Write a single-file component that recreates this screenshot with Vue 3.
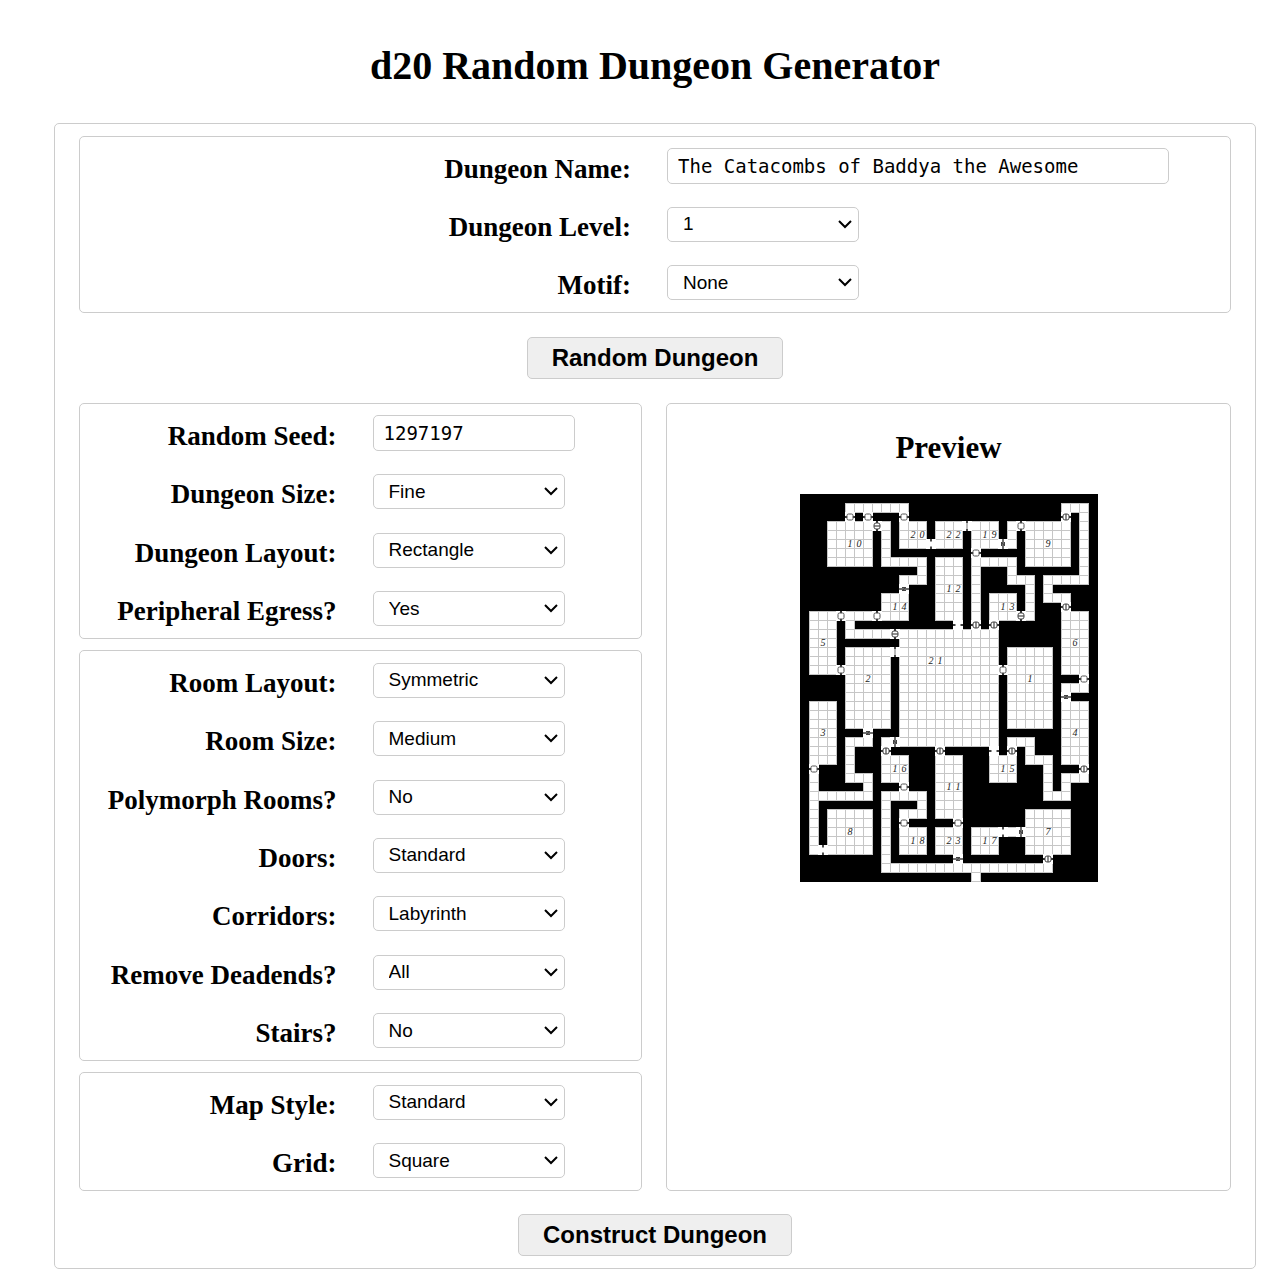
<script setup>
import { ref } from 'vue'

const name = ref('The Catacombs of Baddya the Awesome')
const seed = ref('1297197')

const naming = [
  { id: 'level', label: 'Dungeon Level:', options: ['1', '2', '3', '4', '5'] },
  { id: 'motif', label: 'Motif:', options: ['None'] },
]
const dungeon = [
  { id: 'size', label: 'Dungeon Size:', options: ['Fine'] },
  { id: 'layout', label: 'Dungeon Layout:', options: ['Rectangle'] },
  { id: 'egress', label: 'Peripheral Egress?', options: ['Yes', 'No'] },
]
const rooms = [
  { id: 'room-layout', label: 'Room Layout:', options: ['Symmetric'] },
  { id: 'room-size', label: 'Room Size:', options: ['Medium'] },
  { id: 'polymorph', label: 'Polymorph Rooms?', options: ['No', 'Yes'] },
  { id: 'doors', label: 'Doors:', options: ['Standard'] },
  { id: 'corridors', label: 'Corridors:', options: ['Labyrinth'] },
  { id: 'deadends', label: 'Remove Deadends?', options: ['All'] },
  { id: 'stairs', label: 'Stairs?', options: ['No', 'Yes'] },
]
const mapping = [
  { id: 'map-style', label: 'Map Style:', options: ['Standard'] },
  { id: 'grid', label: 'Grid:', options: ['Square'] },
]

// Open floor as [first column, first row, last column, last row]
const areas = [
  [5, 1, 11, 1], [3, 3, 7, 7], [9, 3, 9, 7], [9, 7, 13, 7], [13, 7, 13, 9], [11, 9, 13, 9],
  [9, 11, 11, 13], [11, 3, 13, 5], [15, 3, 17, 5], [15, 7, 17, 13], [1, 13, 3, 19],
  [5, 13, 7, 13], [5, 14, 5, 14], [5, 15, 9, 15], [11, 15, 21, 27], [5, 17, 9, 25],
  [1, 23, 3, 29], [1, 31, 1, 39], [1, 33, 7, 33], [7, 31, 7, 32], [5, 31, 7, 31],
  [5, 27, 5, 31], [5, 27, 7, 27], [3, 35, 7, 39], [9, 27, 9, 27], [9, 29, 11, 31],
  [9, 33, 13, 33], [9, 33, 9, 41], [13, 33, 13, 35], [11, 35, 13, 35], [11, 37, 13, 39],
  [9, 41, 27, 41], [19, 42, 19, 42], [15, 29, 17, 35], [15, 37, 17, 39], [19, 37, 21, 39],
  [23, 37, 23, 37], [25, 35, 29, 39], [23, 27, 25, 27], [25, 27, 25, 29], [25, 29, 27, 29],
  [27, 29, 27, 33], [27, 33, 29, 33], [29, 31, 29, 33], [29, 31, 31, 31], [29, 23, 31, 29],
  [21, 29, 23, 31], [23, 17, 27, 25], [29, 13, 31, 19], [29, 21, 31, 21], [27, 11, 29, 11],
  [27, 9, 27, 11], [27, 9, 31, 9], [31, 1, 31, 9], [29, 1, 31, 1], [25, 3, 29, 7],
  [23, 3, 23, 5], [19, 3, 21, 5], [19, 7, 23, 7], [19, 7, 19, 13], [23, 7, 23, 9],
  [23, 9, 25, 9], [25, 9, 25, 13], [21, 11, 23, 13],
]
const seen = new Set()
const cells = []
for (const [c1, r1, c2, r2] of areas) {
  for (let c = c1; c <= c2; c++) {
    for (let r = r1; r <= r2; r++) {
      const key = c + ',' + r
      if (!seen.has(key)) {
        seen.add(key)
        cells.push({ key, x: c * 9, y: r * 9 })
      }
    }
  }
}

// [column, row, kind, 1 when the wall runs vertically]
const doors = [
  [5, 2, 'door', 0], [7, 2, 'door', 0], [11, 2, 'door', 0], [8, 3, 'locked', 1],
  [14, 5, 'arch', 1], [11, 10, 'secret', 0], [4, 13, 'door', 1], [8, 13, 'door', 1],
  [10, 15, 'locked', 1], [10, 17, 'open', 1], [4, 19, 'door', 1], [7, 26, 'secret', 0],
  [10, 27, 'secret', 1], [9, 28, 'locked', 0], [15, 28, 'locked', 0], [1, 30, 'door', 0],
  [11, 32, 'door', 0], [11, 36, 'door', 0], [17, 36, 'door', 0], [2, 39, 'arch', 1],
  [17, 40, 'secret', 0], [22, 37, 'arch', 1], [24, 37, 'secret', 1], [27, 40, 'locked', 0],
  [21, 28, 'arch', 0], [23, 28, 'locked', 0], [31, 30, 'locked', 0], [29, 22, 'secret', 0],
  [31, 20, 'door', 0], [22, 19, 'door', 1], [29, 12, 'locked', 0], [29, 2, 'locked', 0],
  [24, 3, 'door', 1], [22, 5, 'secret', 1], [18, 3, 'open', 1], [19, 6, 'door', 0],
  [24, 13, 'locked', 1], [21, 14, 'locked', 0], [19, 14, 'locked', 0], [17, 14, 'arch', 0],
]

// [column, row, room number]; each digit takes one square
const numbers = [
  [5, 5, '10'], [12, 4, '20'], [16, 4, '22'], [20, 4, '19'], [27, 5, '9'], [16, 10, '12'],
  [10, 12, '14'], [22, 12, '13'], [2, 16, '5'], [7, 20, '2'], [14, 18, '21'], [25, 20, '1'],
  [30, 16, '6'], [2, 26, '3'], [30, 26, '4'], [10, 30, '16'], [5, 37, '8'], [12, 38, '18'],
  [16, 32, '11'], [22, 30, '15'], [20, 38, '17'], [16, 38, '23'], [27, 37, '7'],
]
const digits = numbers.flatMap(([c, r, n]) =>
  [...n].map((d, i) => ({ key: c + i + '-' + r, d, x: (c + i) * 9 + 5, y: r * 9 + 8 })),
)
</script>

<template>
  <main class="page">
    <h1>d20 Random Dungeon Generator</h1>
    <form class="card" @submit.prevent>
      <section class="group group-naming">
        <div class="row">
          <label for="name">Dungeon Name:</label>
          <div class="field"><input id="name" v-model="name" class="wide" type="text" spellcheck="false" /></div>
        </div>
        <div v-for="f in naming" :key="f.id" class="row">
          <label :for="f.id">{{ f.label }}</label>
          <div class="field">
            <select :id="f.id"><option v-for="o in f.options" :key="o">{{ o }}</option></select>
          </div>
        </div>
      </section>

      <div class="action"><button type="button">Random Dungeon</button></div>

      <div class="columns">
        <div class="settings">
          <section class="group group-dungeon">
            <div class="row">
              <label for="seed">Random Seed:</label>
              <div class="field"><input id="seed" v-model="seed" type="text" /></div>
            </div>
            <div v-for="f in dungeon" :key="f.id" class="row">
              <label :for="f.id">{{ f.label }}</label>
              <div class="field">
                <select :id="f.id"><option v-for="o in f.options" :key="o">{{ o }}</option></select>
              </div>
            </div>
          </section>
          <section class="group group-rooms">
            <div v-for="f in rooms" :key="f.id" class="row">
              <label :for="f.id">{{ f.label }}</label>
              <div class="field">
                <select :id="f.id"><option v-for="o in f.options" :key="o">{{ o }}</option></select>
              </div>
            </div>
          </section>
          <section class="group group-map">
            <div v-for="f in mapping" :key="f.id" class="row">
              <label :for="f.id">{{ f.label }}</label>
              <div class="field">
                <select :id="f.id"><option v-for="o in f.options" :key="o">{{ o }}</option></select>
              </div>
            </div>
          </section>
        </div>

        <section class="group preview">
          <h2>Preview</h2>
          <svg class="map" width="298" height="388" viewBox="0 0 298 388" role="img" aria-label="Dungeon map">
            <rect width="298" height="388" fill="#000" />
            <g fill="#fff" stroke="#c6c6c6">
              <rect v-for="c in cells" :key="c.key" :x="c.x + 0.5" :y="c.y + 0.5" width="9" height="9" />
            </g>
            <g
              v-for="[c, r, kind, vertical] in doors"
              :key="c + '-' + r"
              :transform="`translate(${c * 9 + 5} ${r * 9 + 5}) rotate(${vertical ? 90 : 0})`"
            >
              <rect x="-5" y="-5" width="10" height="10" fill="#fff" />
              <template v-if="kind === 'door'">
                <path d="M-5.5 0H5.5" stroke="#000" stroke-width="1.6" />
                <rect x="-3" y="-3" width="6" height="6" rx="1.5" fill="#fff" stroke="#555" stroke-width="1" />
              </template>
              <template v-else-if="kind === 'locked'">
                <path d="M-5.5 0H5.5" stroke="#000" stroke-width="1.6" />
                <rect x="-3" y="-3" width="6" height="6" rx="2" fill="#fff" stroke="#444" stroke-width="1" />
                <path d="M0 -3V3" stroke="#444" stroke-width="1.2" />
              </template>
              <template v-else-if="kind === 'secret'">
                <path d="M-5.5 0H5.5" stroke="#111" stroke-width="1.2" />
                <path d="M-2 -1.5H2L-2 1.5H2" fill="none" stroke="#444" stroke-width="1" />
              </template>
              <template v-else-if="kind === 'arch'">
                <path d="M-5.5 0H-2.5M2.5 0H5.5" stroke="#000" stroke-width="1.4" />
              </template>
              <template v-else>
                <path d="M-5.5 0H-3M3 0H5.5" stroke="#000" stroke-width="1.4" />
                <path d="M-3 0H3" stroke="#777" stroke-width="1" />
              </template>
            </g>
            <text v-for="t in digits" :key="t.key" :x="t.x" :y="t.y" class="digit">{{ t.d }}</text>
          </svg>
        </section>
      </div>

      <div class="action"><button type="submit">Construct Dungeon</button></div>
    </form>
  </main>
</template>

<style>
body {
  margin: 0;
  background: #fff;
}
</style>

<style scoped>
.page {
  box-sizing: border-box;
  padding: 42px 14px 6px 54px;
  color: #000;
  font-family: "Liberation Serif", "Times New Roman", serif;
}
h1 {
  margin: 0 0 33px;
  font-size: 40px;
  line-height: 48px;
  font-weight: bold;
  text-align: center;
}
.card,
.group {
  box-sizing: border-box;
  border: 1px solid #ccc;
  border-radius: 5px;
}
.card {
  padding: 12px 24px;
}
.group {
  display: flex;
  flex-direction: column;
}
.group-naming {
  min-height: 177px;
}
.group-dungeon {
  min-height: 236px;
}
.group-rooms {
  min-height: 411px;
}
.group-map {
  min-height: 119px;
}
.row {
  flex: 1;
  display: grid;
  grid-template-columns: 1fr 1fr;
  align-items: center;
}
label {
  padding: 5px 24px 0 0;
  font-size: 27px;
  line-height: 32px;
  font-weight: bold;
  text-align: right;
  white-space: nowrap;
}
.field {
  display: flex;
  padding-left: 12px;
}
input,
select {
  box-sizing: border-box;
  margin: 0;
  border: 1px solid #ccc;
  border-radius: 5px;
  background: #fff;
  color: #000;
  font-size: 19px;
}
input {
  width: 202px;
  height: 36px;
  padding: 0 10px;
  font-family: "DejaVu Sans Mono", monospace;
}
input.wide {
  width: 502px;
}
select {
  appearance: none;
  width: 192px;
  height: 35px;
  padding: 0 32px 1px 15px;
  background: #fff url("data:image/svg+xml,%3Csvg xmlns='http://www.w3.org/2000/svg' width='14' height='9'%3E%3Cpath d='M1 1L7 7L13 1' fill='none' stroke='%23000' stroke-width='2'/%3E%3C/svg%3E") no-repeat right 6px center;
  font-family: "Liberation Sans", Arial, sans-serif;
}
.action {
  display: flex;
  justify-content: center;
  margin: 24px 0;
}
.action:last-child {
  margin: 23px 0 0;
}
button {
  height: 42px;
  padding: 0 24px;
  border: 1px solid #ccc;
  border-radius: 5px;
  background: #efefef;
  color: #000;
  font: bold 24px "Liberation Sans", Arial, sans-serif;
}
.columns {
  display: grid;
  grid-template-columns: 563fr 565fr;
  gap: 24px;
}
.settings {
  display: flex;
  flex-direction: column;
  gap: 11px;
}
.preview {
  align-items: center;
}
h2 {
  margin: 26px 0 28px;
  font-size: 31px;
  line-height: 36px;
  font-weight: bold;
}
.digit {
  fill: #222;
  font-size: 10px;
  font-style: italic;
  text-anchor: middle;
}
</style>
